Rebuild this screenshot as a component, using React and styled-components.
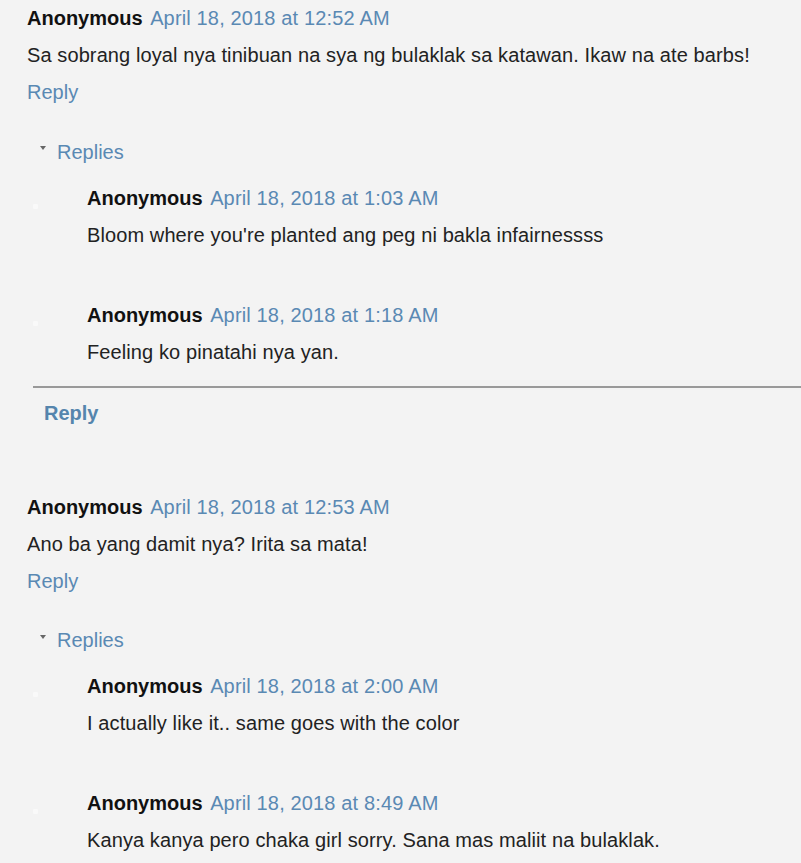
import React from "react";
import styled, { createGlobalStyle } from "styled-components";

const Global = createGlobalStyle`
  html, body { margin: 0; padding: 0; background: #f3f3f3; }
  body { font-family: "Liberation Sans", Arial, sans-serif; }
`;

const Page = styled.div`
  background: #f3f3f3;
  height: 863px;
  overflow: hidden;
  color: #222;
  font-size: 20px;
`;

const Thread = styled.div`
  margin-bottom: 57px;
`;

const Line = styled.div`
  height: 37px;
  line-height: 37px;
  white-space: nowrap;
`;

const Head = styled(Line)``;

const Author = styled.span`
  font-weight: bold;
  color: #111;
`;

const Stamp = styled.a`
  margin-left: 2px;
  color: #5a89b3;
  text-decoration: none;
  letter-spacing: 0.15px;
`;

const Body = styled(Line)`
  color: #222;
  letter-spacing: 0.1px;
`;

const ReplyLink = styled(Line)`
  color: #5a89b3;
`;

const Top = styled.div`
  padding-left: 27px;
`;

const Replies = styled.div`
  margin-left: 39.5px;
  margin-top: 22.5px;
  display: flex;
  align-items: center;
  gap: 11.5px;
  height: 37px;
  color: #5a89b3;
`;

const Arrow = styled.span`
  width: 0;
  height: 0;
  border-left: 3.5px solid transparent;
  border-right: 3.5px solid transparent;
  border-top: 4px solid #666;
  margin-top: -8px;
`;

const Nested = styled.div`
  display: flex;
  margin-top: ${(p) => (p.$first ? "9px" : "43px")};
`;

const Avatar = styled.div`
  width: 5px;
  height: 5px;
  margin: 24px 49px 0 33px;
  background: #f9f9f9;
  border-radius: 1px;
`;

const Divider = styled.hr`
  border: 0;
  height: 2px;
  background: #999;
  margin: 15.5px 0 0 33px;
`;

const BoldReply = styled(Line)`
  margin-top: 6.5px;
  padding-left: 44px;
  font-weight: bold;
  color: #5585ad;
`;

const threads = [
  {
    date: "April 18, 2018 at 12:52 AM",
    text: "Sa sobrang loyal nya tinibuan na sya ng bulaklak sa katawan. Ikaw na ate barbs!",
    replies: [
      { date: "April 18, 2018 at 1:03 AM", text: "Bloom where you're planted ang peg ni bakla infairnessss" },
      { date: "April 18, 2018 at 1:18 AM", text: "Feeling ko pinatahi nya yan." },
    ],
    footer: true,
  },
  {
    date: "April 18, 2018 at 12:53 AM",
    text: "Ano ba yang damit nya? Irita sa mata!",
    replies: [
      { date: "April 18, 2018 at 2:00 AM", text: "I actually like it.. same goes with the color" },
      { date: "April 18, 2018 at 8:49 AM", text: "Kanya kanya pero chaka girl sorry. Sana mas maliit na bulaklak." },
    ],
    footer: false,
  },
];

function Comment({ date, text }) {
  return (
    <>
      <Head>
        <Author>Anonymous</Author> <Stamp>{date}</Stamp>
      </Head>
      <Body>{text}</Body>
    </>
  );
}

export default function App() {
  return (
    <Page>
      <Global />
      {threads.map((t, i) => (
        <Thread key={i}>
          <Top>
            <Comment date={t.date} text={t.text} />
            <ReplyLink>Reply</ReplyLink>
          </Top>
          <Replies>
            <Arrow />
            <span>Replies</span>
          </Replies>
          {t.replies.map((r, j) => (
            <Nested key={j} $first={j === 0}>
              <Avatar />
              <div>
                <Comment date={r.date} text={r.text} />
              </div>
            </Nested>
          ))}
          {t.footer && (
            <>
              <Divider />
              <BoldReply>Reply</BoldReply>
            </>
          )}
        </Thread>
      ))}
    </Page>
  );
}
